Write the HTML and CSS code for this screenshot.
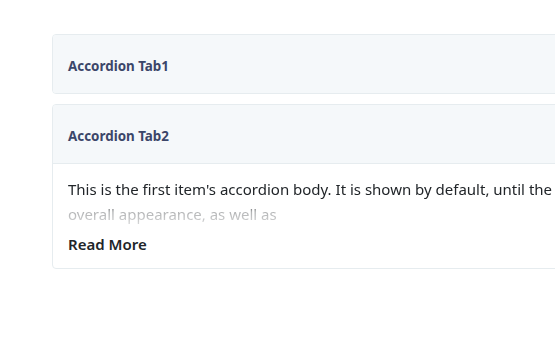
FILE: index.html
```html
<!DOCTYPE html>
<html lang="en">
<head>
    <meta charset="UTF-8">
    <meta name="viewport" content="width=device-width, initial-scale=1.0">
    <title>Accordion</title>
    <link rel="stylesheet" href="styles.css">
</head>
<body>
    <div class="accordion">
        <div class="item">
            <div class="item-header">Accordion Tab1</div>
        </div>
        <div class="item">
            <div class="item-header open">Accordion Tab2</div>
            <div class="item-body">
                <div class="excerpt">
                    <span class="line">This is the first item's accordion body. It is shown by default, until the collapse plugin adds the appropriate classes</span>
                    <span class="line">overall appearance, as well as</span>
                </div>
                <a href="#" class="read-more">Read More</a>
            </div>
        </div>
    </div>
</body>
</html>
```

FILE: styles.css
```css
body {
    margin: 0;
    padding: 0;
    font-family: "Segoe UI", "Noto Sans", sans-serif;
    color: #212529;
    background: #fff;
    overflow: hidden;
}
.accordion {
    width: 640px;
    padding: 34px 0 0 52px;
    display: flex;
    flex-direction: column;
    gap: 10px;
}
.item {
    border: 1px solid #e6ecef;
    border-radius: 4px;
    overflow: hidden;
}
.item-header {
    background: #f5f8fa;
    padding: 4px 15px 0;
    height: 54px;
    display: flex;
    align-items: center;
    font-size: 13.4px;
    font-weight: bold;
    color: #3b4669;
}
.item-header.open {
    border-bottom: 1px solid #e6ecef;
}
.item-body {
    padding: 13px 15px 12px;
}
.excerpt {
    font-size: 15px;
    line-height: 25px;
    height: 50px;
    overflow: hidden;
    -webkit-mask-image: linear-gradient(to bottom, #000 50%, rgba(0, 0, 0, 0.35) 70%, rgba(0, 0, 0, 0.15) 100%);
    mask-image: linear-gradient(to bottom, #000 50%, rgba(0, 0, 0, 0.35) 70%, rgba(0, 0, 0, 0.15) 100%);
}
.line {
    display: block;
    white-space: nowrap;
}
.read-more {
    display: block;
    margin-top: 5px;
    font-size: 15px;
    line-height: 24px;
    font-weight: 600;
    color: #212529;
    text-decoration: none;
}
```
